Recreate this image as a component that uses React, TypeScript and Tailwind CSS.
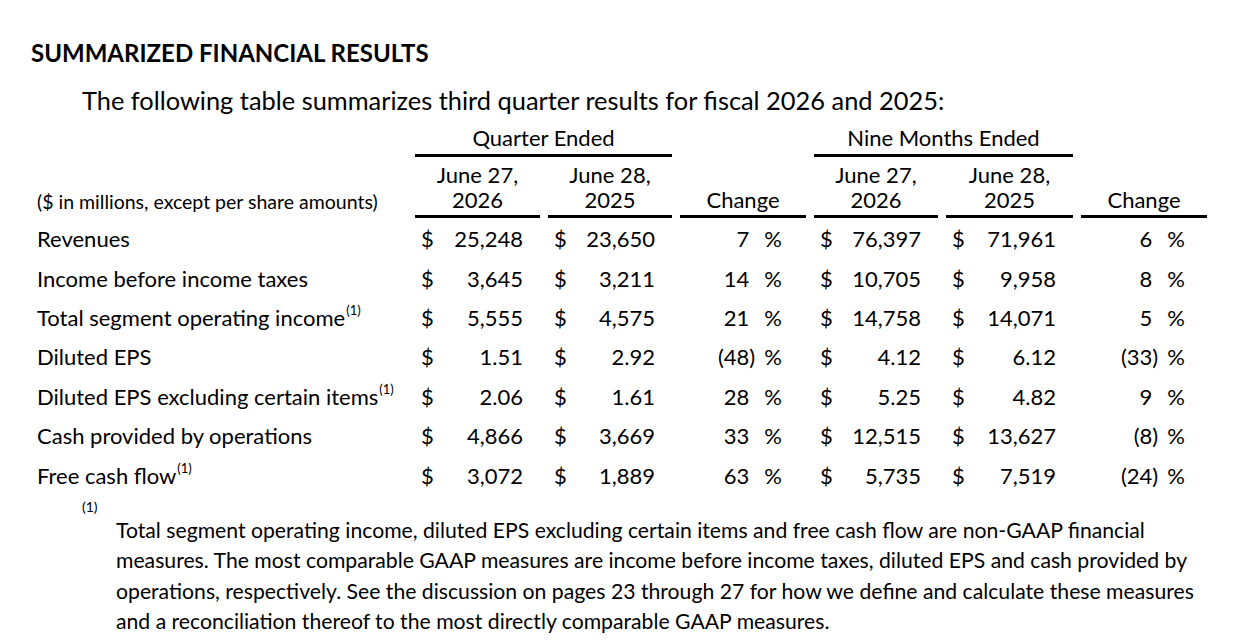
import React from "react";

type Row = {
  label: string;
  note?: boolean;
  q26: string;
  q25: string;
  qChg: string;
  n26: string;
  n25: string;
  nChg: string;
};

const rows: Row[] = [
  { label: "Revenues", q26: "25,248", q25: "23,650", qChg: "7", n26: "76,397", n25: "71,961", nChg: "6" },
  { label: "Income before income taxes", q26: "3,645", q25: "3,211", qChg: "14", n26: "10,705", n25: "9,958", nChg: "8" },
  { label: "Total segment operating income", note: true, q26: "5,555", q25: "4,575", qChg: "21", n26: "14,758", n25: "14,071", nChg: "5" },
  { label: "Diluted EPS", q26: "1.51", q25: "2.92", qChg: "(48)", n26: "4.12", n25: "6.12", nChg: "(33)" },
  { label: "Diluted EPS excluding certain items", note: true, q26: "2.06", q25: "1.61", qChg: "28", n26: "5.25", n25: "4.82", nChg: "9" },
  { label: "Cash provided by operations", q26: "4,866", q25: "3,669", qChg: "33", n26: "12,515", n25: "13,627", nChg: "(8)" },
  { label: "Free cash flow", note: true, q26: "3,072", q25: "1,889", qChg: "63", n26: "5,735", n25: "7,519", nChg: "(24)" },
];

function Note() {
  return <sup className="ml-[1px] text-[13px] leading-none align-[4px]">(1)</sup>;
}

function Money({ value }: { value: string }) {
  return (
    <div className="flex items-center pl-[6px] pr-[17px]">
      <span>$</span>
      <span className="flex-1 text-right">{value}</span>
    </div>
  );
}

function Pct({ value, right }: { value: string; right: string }) {
  const neg = value.startsWith("(");
  const digits = neg ? value.slice(0, -1) : value;
  return (
    <div className={`flex items-center justify-end ${right}`}>
      <span className="text-right">{digits}</span>
      <span className="w-[8px]">{neg ? ")" : ""}</span>
      <span className="ml-[7px]">%</span>
    </div>
  );
}

function DateHead({ line1, line2 }: { line1: string; line2: string }) {
  return (
    <div className="flex flex-col items-center justify-end border-b-[3px] border-black pb-[3px] leading-[25px]">
      <span>{line1}</span>
      <span>{line2}</span>
    </div>
  );
}

function Cell({ first, children }: { first: boolean; children: React.ReactNode }) {
  return (
    <div className={`flex h-[39.4px] items-center ${first ? "mt-[1px]" : ""}`}>
      <div className="w-full">{children}</div>
    </div>
  );
}

export default function App() {
  return (
    <div
      className="h-[640px] w-[1246px] overflow-hidden bg-white text-black"
      style={{ fontFamily: "Lato, 'Noto Sans', sans-serif" }}
    >
      <h1 className="pl-[31px] pt-[39px] text-[24px] font-bold leading-[28px]">
        SUMMARIZED FINANCIAL RESULTS
      </h1>
      <p className="mt-[18px] pl-[82px] text-[25.4px] leading-[30px]">
        The following table summarizes third quarter results for fiscal 2026 and 2025:
      </p>

      <div className="mt-[10px] grid grid-cols-[370px_125px_124px_126px_124px_127px_126px] gap-x-2 pl-[37px] text-[22px]">
        {/* group headings */}
        <div />
        <div className="col-span-2 border-b-[3px] border-black pb-[3px] text-center leading-[26px]">
          Quarter Ended
        </div>
        <div />
        <div className="col-span-2 border-b-[3px] border-black pb-[3px] text-center leading-[26px]">
          Nine Months Ended
        </div>
        <div />

        {/* column headings */}
        <div className="flex items-end pb-[4px] text-[19.5px] leading-[24px]">
          ($ in millions, except per share amounts)
        </div>
        <div className="pt-[5px]">
          <DateHead line1="June 27," line2="2026" />
        </div>
        <div className="pt-[5px]">
          <DateHead line1="June 28," line2="2025" />
        </div>
        <div className="flex items-end justify-center border-b-[3px] border-black pb-[3px] leading-[25px]">
          Change
        </div>
        <div className="pt-[5px]">
          <DateHead line1="June 27," line2="2026" />
        </div>
        <div className="pt-[5px]">
          <DateHead line1="June 28," line2="2025" />
        </div>
        <div className="flex items-end justify-center border-b-[3px] border-black pb-[3px] leading-[25px]">
          Change
        </div>

        {/* body */}
        {rows.map((r, i) => (
          <React.Fragment key={r.label}>
            <Cell first={i === 0}>
              <span>
                {r.label}
                {r.note && <Note />}
              </span>
            </Cell>
            <Cell first={i === 0}>
              <Money value={r.q26} />
            </Cell>
            <Cell first={i === 0}>
              <Money value={r.q25} />
            </Cell>
            <Cell first={i === 0}>
              <Pct value={r.qChg} right="pr-[24px]" />
            </Cell>
            <Cell first={i === 0}>
              <Money value={r.n26} />
            </Cell>
            <Cell first={i === 0}>
              <Money value={r.n25} />
            </Cell>
            <Cell first={i === 0}>
              <Pct value={r.nChg} right="pr-[22px]" />
            </Cell>
          </React.Fragment>
        ))}
      </div>

      <div className="mt-[20px] flex pl-[82px] text-[21.2px] leading-[30.5px]">
        <sup className="-mt-[8px] w-[34px] shrink-0 text-[14px] leading-none">(1)</sup>
        <p className="whitespace-nowrap">
          Total segment operating income, diluted EPS excluding certain items and free cash flow are non-GAAP financial
          <br />
          measures. The most comparable GAAP measures are income before income taxes, diluted EPS and cash provided by
          <br />
          operations, respectively. See the discussion on pages 23 through 27 for how we define and calculate these measures
          <br />
          and a reconciliation thereof to the most directly comparable GAAP measures.
        </p>
      </div>
    </div>
  );
}
